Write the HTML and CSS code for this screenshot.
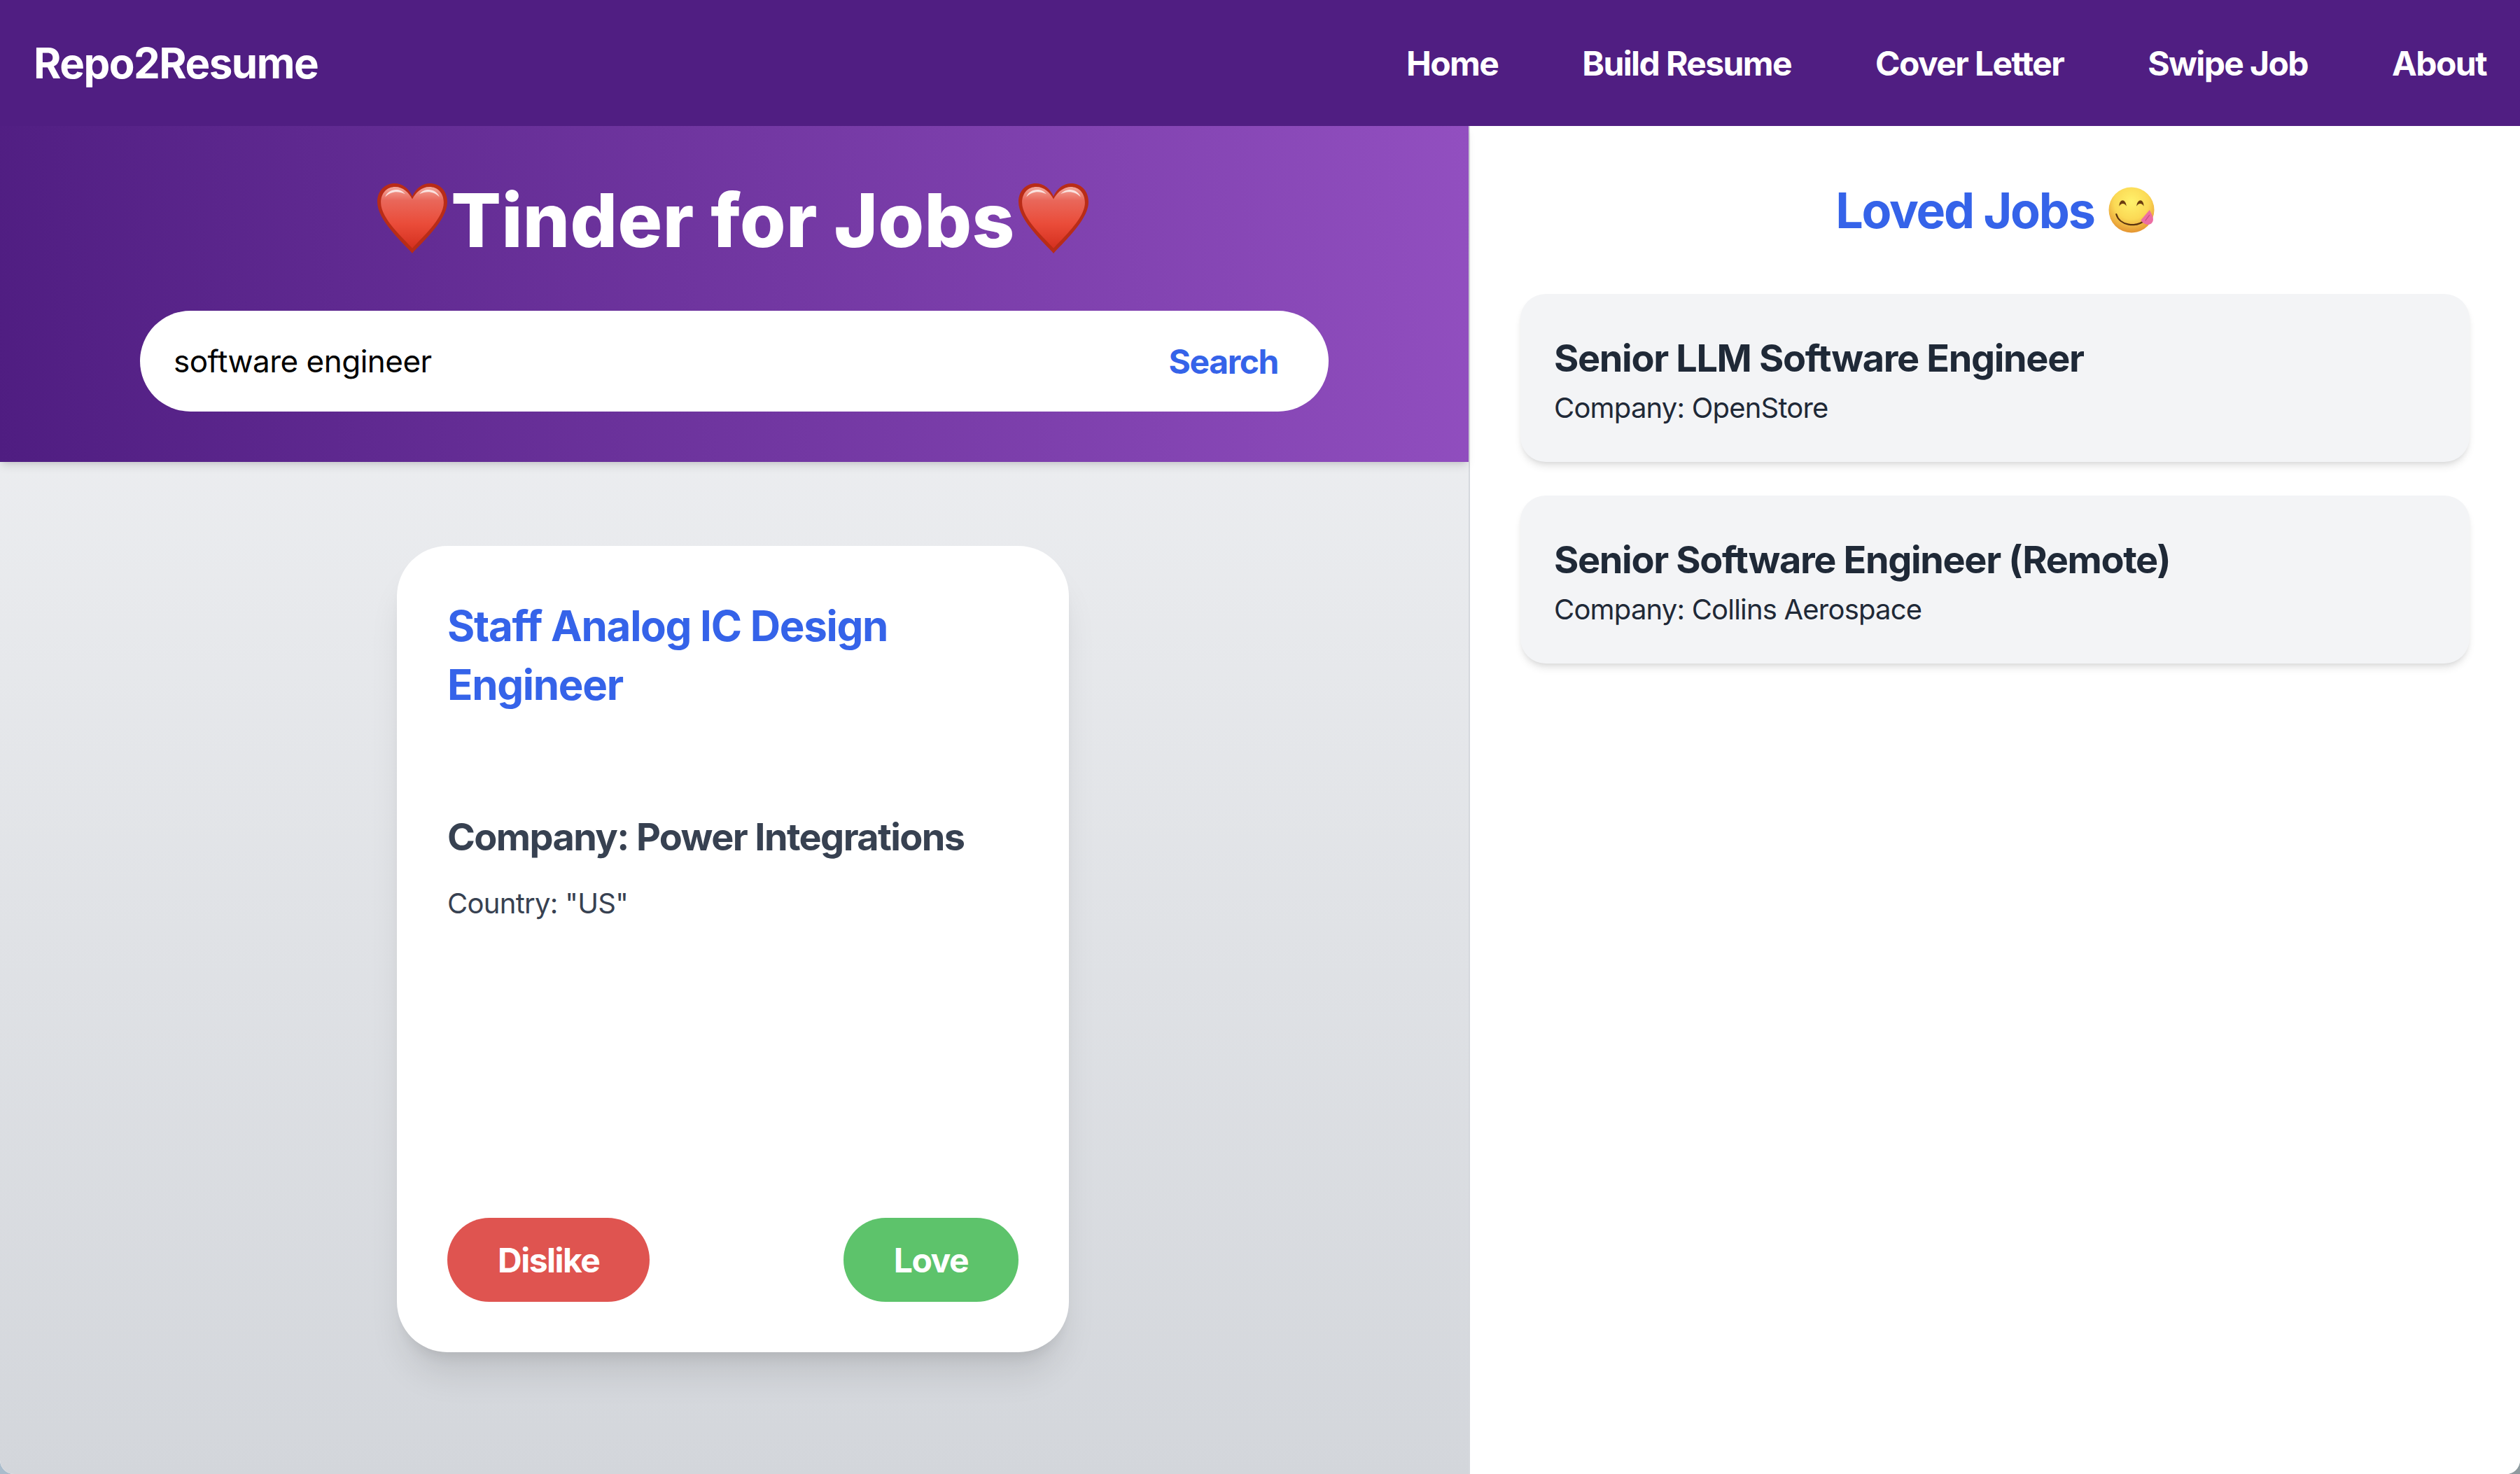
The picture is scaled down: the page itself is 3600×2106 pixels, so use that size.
FILE: index.html
```html
<!DOCTYPE html>
<html lang="en">
<head>
<meta charset="utf-8">
<title>Repo2Resume</title>
<link rel="stylesheet" href="styles.css">
</head>
<body>
<nav class="navbar">
  <a class="logo">Repo2Resume</a>
  <div class="nav-links">
    <a>Home</a><a>Build Resume</a><a>Cover Letter</a><a>Swipe Job</a><a>About</a>
  </div>
</nav>
<main class="layout">
  <section class="swipe">
    <header class="hero">
      <h1 class="hero-title">
        <svg class="heart" viewBox="0 0 100 100" aria-label="heart"><use href="#heart-shape"/></svg><span class="hero-text">Tinder for Jobs</span><svg class="heart" viewBox="0 0 100 100" aria-label="heart"><use href="#heart-shape"/></svg>
      </h1>
      <form class="search">
        <span class="search-input">software engineer</span>
        <span class="search-btn">Search</span>
      </form>
    </header>
    <div class="stage">
      <article class="job-card">
        <h2 class="job-title">Staff Analog IC Design Engineer</h2>
        <h3 class="job-company">Company: Power Integrations</h3>
        <p class="job-country">Country: "US"</p>
        <div class="actions">
          <button class="btn btn-dislike" type="button">Dislike</button>
          <button class="btn btn-love" type="button">Love</button>
        </div>
      </article>
    </div>
  </section>
  <aside class="loved">
    <h2 class="loved-title">Loved Jobs <svg class="yum" viewBox="0 0 64 64" aria-label="yum">
      <defs>
        <radialGradient id="face" cx="50%" cy="32%" r="70%">
          <stop offset="0" stop-color="#fff26c"/><stop offset=".55" stop-color="#fbd955"/><stop offset="1" stop-color="#e38f2e"/>
        </radialGradient>
      </defs>
      <circle cx="32" cy="32" r="31.5" fill="url(#face)"/>
      <path d="M15 27c0-11 9-11 10 0c-2-5-8-5-10 0zM39 27c1-11 10-11 10 0c-2-5-8-5-10 0z" fill="#6b3d10"/>
      <path d="M11 38c4 15 27 20 41 7" fill="none" stroke="#5c3510" stroke-width="2.2" stroke-linecap="round"/>
      <path d="M45 46l12-14c2 4 5 9 5 13c0 7-8 9-12 6c-2-1-4-3-5-5z" fill="#ec6ea3"/>
      <path d="M51 47l6-8" stroke="#c94a86" stroke-width="1.2"/>
    </svg></h2>
    <div class="loved-list">
      <article class="loved-card">
        <h3 class="loved-job">Senior LLM Software Engineer</h3>
        <p class="loved-company">Company: OpenStore</p>
      </article>
      <article class="loved-card">
        <h3 class="loved-job">Senior Software Engineer (Remote)</h3>
        <p class="loved-company">Company: Collins Aerospace</p>
      </article>
    </div>
  </aside>
</main>
<svg class="defs" aria-hidden="true">
  <defs>
    <linearGradient id="heart-fill" x1="0" y1="0" x2="0" y2="1">
      <stop offset="0" stop-color="#f3a79b"/><stop offset=".22" stop-color="#e9675a"/><stop offset=".6" stop-color="#ea4c39"/><stop offset="1" stop-color="#d5301f"/>
    </linearGradient>
    <path id="heart-path" d="M50 99C38 85 1 53 1 27C1 10 13 1 25 1C36 1 45 8 50 19C55 8 64 1 75 1C87 1 99 10 99 27C99 53 62 85 50 99Z"/>
    <symbol id="heart-shape" viewBox="0 0 100 100">
      <use href="#heart-path" fill="#b92c17"/>
      <path d="M50 92C39 79 6 51 6 28C6 14 15 6 26 6C37 6 45 14 50 23C55 14 63 6 74 6C85 6 94 14 94 28C94 51 61 79 50 92Z" fill="url(#heart-fill)"/>
      <path d="M12 20C16 9 32 6 40 16C30 11 20 12 12 20ZM60 16C68 6 84 9 88 20C80 12 70 11 60 16Z" fill="#fff" opacity=".75"/>
    </symbol>
  </defs>
</svg>
</body>
</html>
```
FILE: styles.css
```css
* { box-sizing: border-box; }
html { height: 2106px; overflow: hidden; background: linear-gradient(90deg, #a9bccc, #8f9a9f); }
body {
  margin: 0; height: 2106px; overflow: hidden;
  border-radius: 0 0 20px 20px;
  font-family: Inter, "Noto Sans", sans-serif; background: #fff; color: #1f2937;
}
h1, h2, h3, p { margin: 0; }
.defs { width: 0; height: 0; display: block; position: absolute; }

.navbar {
  height: 180px; padding: 0 48px;
  display: flex; align-items: center; justify-content: space-between;
  background: #501e82; color: #fff;
  position: relative; z-index: 3;
}
.logo { font-size: 60px; font-weight: 700; letter-spacing: -1.5px; }
.nav-links { display: flex; gap: 120px; font-size: 48px; font-weight: 700; letter-spacing: -1.6px; }

.layout { display: flex; height: 1926px; }
.swipe {
  width: 2100px; display: flex; flex-direction: column;
  border-right: 2px solid #d5d8dd;
  background: linear-gradient(180deg, #f3f4f6 0%, #d3d6db 100%);
}
.hero {
  height: 480px; padding-top: 74px;
  display: flex; flex-direction: column; align-items: center;
  background: linear-gradient(82deg, #4f1d81 0%, #924fc0 100%);
  box-shadow: 0 8px 12px -2px rgba(0,0,0,.1), 0 4px 8px -4px rgba(0,0,0,.1);
  position: relative; z-index: 1;
}
.hero-title {
  display: flex; align-items: center; gap: 4px; height: 120px; padding-right: 4px;
  font-size: 106px; font-weight: 800; color: #fff; letter-spacing: .4px;
}
.heart { width: 102px; height: 102px; flex: none; margin-top: -4px; }
.search {
  width: 1698px; height: 144px; margin-top: 70px; padding: 0 72px 0 48px;
  display: flex; align-items: center; justify-content: space-between;
  background: #fff; border-radius: 72px; font-size: 48px;
}
.search-input { color: #000; font-size: 44px; letter-spacing: -.5px; }
.search-btn { color: #3563e9; font-weight: 700; letter-spacing: -1.4px; }

.stage { flex: 1; display: flex; justify-content: center; padding: 120px 4px 0 0; }
.job-card {
  width: 960px; height: 1152px; padding: 72px;
  display: flex; flex-direction: column;
  background: #fff; border-radius: 72px;
  box-shadow: 0 40px 50px -10px rgba(0,0,0,.1), 0 16px 20px -12px rgba(0,0,0,.1);
}
.job-title { font-size: 60px; line-height: 84px; font-weight: 700; color: #3563e9; letter-spacing: -1.3px; }
.job-company { margin-top: 140px; font-size: 54px; line-height: 72px; font-weight: 700; color: #374151; letter-spacing: -1.6px; }
.job-country { margin-top: 29px; font-size: 40px; line-height: 60px; color: #374151; letter-spacing: -.7px; }
.actions { margin-top: auto; display: flex; justify-content: space-between; }
.btn {
  height: 120px; padding: 0 72px; border: 0; border-radius: 60px;
  font: 700 48px Inter, sans-serif; letter-spacing: -1.5px; color: #fff;
}
.btn-dislike { background: #df5450; }
.btn-love { background: #5dc36b; }

.loved { flex: 1; padding: 72px 72px 0; background: #fff; }
.loved-title {
  height: 96px; display: flex; align-items: center; justify-content: center; gap: 20px;
  font-size: 70px; font-weight: 700; color: #3563e9; letter-spacing: -2.2px;
}
.yum { width: 66px; height: 66px; flex: none; }
.loved-list { margin-top: 72px; display: flex; flex-direction: column; gap: 48px; }
.loved-card {
  height: 240px; padding: 56px 48px 0;
  background: #f3f4f6; border-radius: 36px;
  box-shadow: 0 8px 12px -2px rgba(0,0,0,.1), 0 4px 8px -4px rgba(0,0,0,.1);
}
.loved-job { font-size: 54px; line-height: 72px; font-weight: 700; color: #1f2937; letter-spacing: -1.35px; }
.loved-company { margin-top: 5px; font-size: 40px; line-height: 60px; color: #1f2937; letter-spacing: -.8px; }
```
